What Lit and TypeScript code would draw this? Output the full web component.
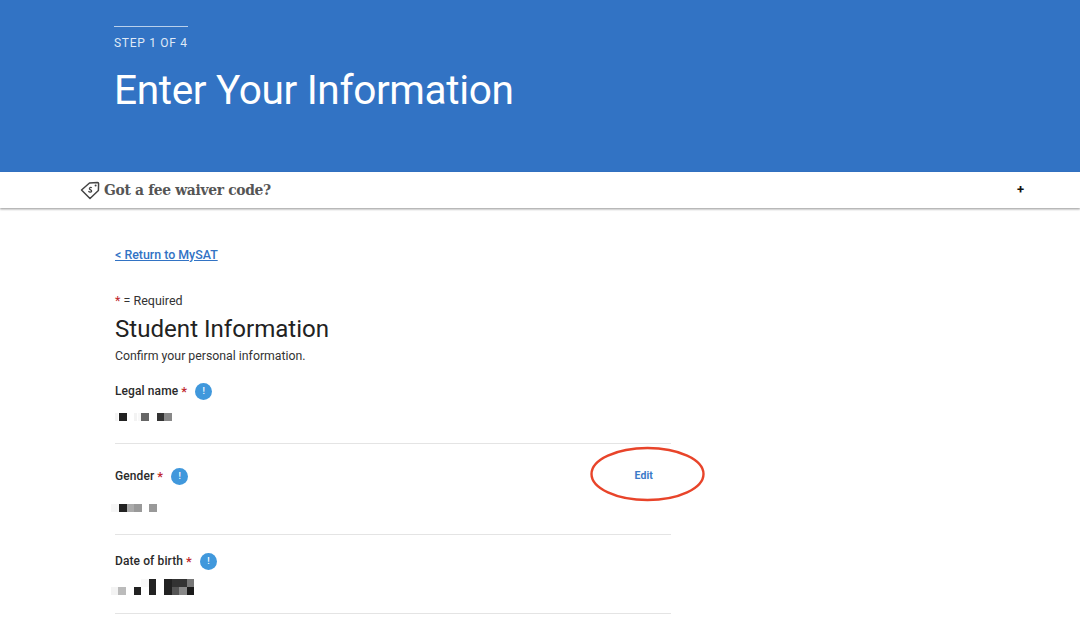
import { LitElement, html, css, svg } from "lit";
import { customElement } from "lit/decorators.js";

type Cell = [number, number, number, number, string];

const MOSAIC_NAME: Cell[] = [
  [0, 0, 3, 8, "#f4f4f4"], [4, 0, 8, 8, "#222"], [19, 0, 3, 8, "#f3f3f3"], [23, 0, 3, 8, "#f8f8f8"],
  [26, 0, 8, 8, "#666"], [42, 0, 7, 8, "#333"], [49, 0, 8, 8, "#888"],
];
const MOSAIC_GENDER: Cell[] = [
  [0, 0, 8, 8, "#f6f6f6"], [8, 0, 8, 8, "#222"], [16, 0, 7, 8, "#aaa"], [23, 0, 8, 8, "#999"], [38, 0, 8, 8, "#999"],
];
const MOSAIC_DOB: Cell[] = [
  [0, 8, 7, 8, "#f3f3f3"], [7, 8, 8, 8, "#bbb"], [23, 8, 7, 8, "#222"], [30, 0, 8, 8, "#f8f8f8"],
  [38, 0, 7, 16, "#222"], [53, 0, 8, 8, "#222"], [61, 0, 7, 8, "#333"], [68, 0, 8, 8, "#333"], [76, 0, 7, 8, "#777"],
  [53, 8, 8, 8, "#222"], [61, 8, 7, 8, "#555"], [68, 8, 8, 8, "#888"], [76, 8, 7, 8, "#1a1a1a"],
];

const mosaic = (cells: Cell[], w: number, h: number) => html`<svg class="mosaic" width=${w} height=${h} viewBox="0 0 ${w} ${h}">
  ${cells.map(([x, y, cw, ch, fill]) => svg`<rect x=${x} y=${y} width=${cw} height=${ch} fill=${fill}></rect>`)}
</svg>`;

@customElement("app-root")
export class AppRoot extends LitElement {
  static styles = css`
    :host { display: block; height: 621px; overflow: hidden; background: #fff; font-family: Roboto, sans-serif; color: #222; }
    .hero { height: 172px; box-sizing: border-box; background: #3273c4; padding: 26px 0 0 114px; color: #fff; }
    .rule { width: 74px; height: 1px; background: #b9d0ec; }
    .step { margin-top: 9px; font-size: 12px; line-height: 14px; letter-spacing: 0.7px; color: #dfe9f6; }
    h1 { margin: 11px 0 0; font-size: 40.6px; line-height: 58px; font-weight: 400; letter-spacing: -0.35px; }
    .waiver { height: 36px; display: flex; align-items: center; padding: 0 56px 0 80px; background: #fff;
      box-shadow: 0 1px 2px rgba(0,0,0,.3), 0 2px 2px rgba(0,0,0,.1); margin-bottom: 1px; }
    .tag { width: 20px; height: 20px; margin-right: 4px; flex: none; }
    .waiver-text { flex: 1; font-family: "DejaVu Serif Condensed", "DejaVu Serif", serif; font-weight: 700; font-size: 15.4px; letter-spacing: -0.32px; color: #555; }
    .plus { font-size: 13px; font-weight: 700; color: #111; line-height: 1; margin-bottom: 2px; }
    main { padding: 38px 0 0 115px; width: 556px; }
    a.back { display: block; font-size: 12.4px; line-height: 16px; font-weight: 500; color: #3273c4; }
    .req-note { margin-top: 30px; font-size: 12.5px; line-height: 16px; color: #333; }
    .star { color: #c0272d; }
    h2 { margin: 5px 0 0; font-size: 24.1px; line-height: 30px; font-weight: 400; color: #222; }
    .sub { margin-top: 4px; font-size: 12.3px; line-height: 16px; color: #333; }
    .field { border-bottom: 1px solid #e4e4e4; }
    .name { margin-top: 17px; height: 62px; }
    .gender { height: 90px; }
    .dob { height: 78px; }
    .label-row { display: flex; align-items: center; height: 20px; font-size: 12px; font-weight: 500; color: #2a2a2a; letter-spacing: 0.1px; }
    .gender .label-row { padding-top: 22px; }
    .dob .label-row { padding-top: 16px; }
    .label-row .star { margin-left: 3px; font-size: 13px; }
    .info { width: 17px; height: 17px; border-radius: 50%; background: #4098dc; color: #fff; display: flex; align-items: center;
      justify-content: center; font-size: 9px; font-weight: 500; margin-left: 8px; }
    .mosaic { display: block; }
    .name .mosaic { margin: 12px 0 0 0; }
    .gender .mosaic { margin: 18px 0 0 -4px; }
    .dob .mosaic { margin: 8px 0 0 -4px; }
    .spacer { flex: 1; }
    .edit-wrap { position: relative; font-size: 10.5px; font-weight: 700; color: #3b7ac8; margin: 0 18px 2px 0; }
    .ellipse { position: absolute; left: -45px; top: -23px; width: 116px; height: 56px; overflow: visible; }
  `;

  render() {
    return html`
      <section class="hero">
        <div class="rule"></div>
        <div class="step">STEP 1 OF 4</div>
        <h1>Enter Your Information</h1>
      </section>
      <section class="waiver">
        <svg class="tag" viewBox="0 0 20 20" fill="none" stroke="#444" stroke-width="1.5" stroke-linejoin="round">
          <path d="M1.5 10 L9.5 3 L17.5 2.5 Q18.6 2.5 18.6 3.5 L18.4 10.5 L10 18.5 Z"></path>
          <circle cx="15.6" cy="5.4" r="1" fill="#444" stroke="none"></circle>
          <path d="M11.8 7.8 C10.8 7 9 7.6 9.5 9 C10 10.2 12 9.8 11.6 11.3 C11.2 12.5 9.4 12.3 8.4 11.3" stroke-width="1.3"></path>
        </svg>
        <span class="waiver-text">Got a fee waiver code?</span>
        <span class="plus">+</span>
      </section>
      <main>
        <a class="back" href="#">&lt; Return to MySAT</a>
        <div class="req-note"><span class="star">*</span> = Required</div>
        <h2>Student Information</h2>
        <div class="sub">Confirm your personal information.</div>
        <div class="field name">
          <div class="label-row">Legal name<span class="star">*</span><span class="info">!</span></div>
          ${mosaic(MOSAIC_NAME, 58, 8)}
        </div>
        <div class="field gender">
          <div class="label-row">Gender<span class="star">*</span><span class="info">!</span>
            <span class="spacer"></span>
            <span class="edit-wrap">Edit
              <svg class="ellipse" viewBox="0 0 116 56" fill="none"><ellipse cx="57.5" cy="28" rx="56" ry="26" stroke="#e8442a" stroke-width="2.4"></ellipse></svg>
            </span>
          </div>
          ${mosaic(MOSAIC_GENDER, 46, 8)}
        </div>
        <div class="field dob">
          <div class="label-row">Date of birth<span class="star">*</span><span class="info">!</span></div>
          ${mosaic(MOSAIC_DOB, 83, 16)}
        </div>
      </main>
    `;
  }
}
